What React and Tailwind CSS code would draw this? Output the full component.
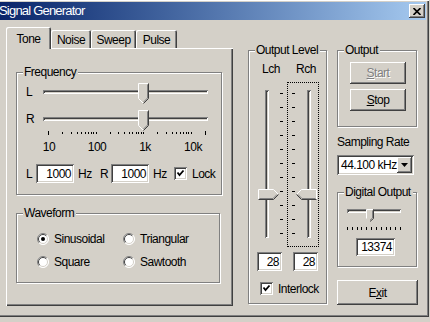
import React from 'react';

const RAISED = 'bg-[#d4d0c8] shadow-[inset_-1px_-1px_#404040,inset_1px_1px_#ffffff,inset_-2px_-2px_#808080,inset_2px_2px_#d4d0c8]';
const SUNKEN = 'bg-white shadow-[inset_1px_1px_#808080,inset_-1px_-1px_#ffffff,inset_2px_2px_#404040,inset_-2px_-2px_#d4d0c8]';
const TRACK = 'bg-[#d4d0c8] shadow-[inset_1px_1px_#808080,inset_-1px_-1px_#ffffff,inset_2px_2px_#404040]';

const FREQS = [];
[10, 100, 1000].forEach(d => { for (let i = 1; i < 10; i++) FREQS.push(d * i); });
FREQS.push(10000, 20000);

function Group({ label, className = '', children }) {
  return (
    <div className={`relative shrink-0 border border-[#808080] shadow-[inset_1px_1px_#ffffff,1px_1px_#ffffff] ${className}`}>
      <span className="absolute -top-[8px] left-[6px] bg-[#d4d0c8] pl-px pr-[2px] leading-[14px]">{label}</span>
      {children}
    </div>
  );
}

function ThumbDown() {
  return (
    <svg width="11" height="21" viewBox="0 0 11 21" className="block">
      <path d="M0.5 15.5V0.5H10.5V15.5L5.5 20.5Z" fill="#d4d0c8" />
      <path d="M0.5 15.5V0.5H10" stroke="#fff" fill="none" />
      <path d="M0.5 15.5L5 20" stroke="#fff" fill="none" />
      <path d="M10.5 0.5V15.5L5.5 20.5" stroke="#404040" fill="none" />
      <path d="M9.5 1.5V15L5.5 19" stroke="#808080" fill="none" />
    </svg>
  );
}

function ThumbSmall() {
  return (
    <svg width="8" height="13" viewBox="0 0 8 13" className="block">
      <path d="M0.5 9.5V0.5H7.5V9.5L4 12.5Z" fill="#d4d0c8" />
      <path d="M0.5 9.5V0.5H7" stroke="#fff" fill="none" />
      <path d="M7.5 0.5V9.5L4 12.5" stroke="#404040" fill="none" />
      <path d="M6.5 1.5V9L4 11.2" stroke="#808080" fill="none" />
    </svg>
  );
}

function ThumbSide({ dir }) {
  const flip = dir === 'left' ? 'scale(-1,1) translate(-21,0)' : undefined;
  return (
    <svg width="21" height="11" viewBox="0 0 21 11" className="block">
      <g transform={flip}>
        <path d="M0.5 0.5H15.5L20.5 5.5L15.5 10.5H0.5Z" fill="#d4d0c8" />
        <path d="M0.5 10.5V0.5H15.5L20 5" stroke="#fff" fill="none" />
        <path d="M0.5 10.5H15.5L20.5 5.5" stroke="#404040" fill="none" />
        <path d="M1.5 9.5H15L19 5.5" stroke="#808080" fill="none" />
      </g>
    </svg>
  );
}

function HSlider({ left }) {
  return (
    <div className="relative h-[21px] w-[165px]">
      <div className={`mt-[7px] h-[4px] w-full ${TRACK}`} />
      <div className="absolute top-0" style={{ left }}>
        <ThumbDown />
      </div>
    </div>
  );
}

function VTicks({ className = '' }) {
  return (
    <div className={`flex flex-col gap-[13px] ${className}`}>
      {Array.from({ length: 11 }).map((_, i) => (
        <div key={i} className="h-px w-[3px] bg-black" />
      ))}
    </div>
  );
}

function Radio({ checked }) {
  return (
    <svg width="12" height="12" viewBox="0 0 12 12" className="block shrink-0">
      <circle cx="6" cy="6" r="5.5" fill="#fff" />
      <path d="M2.1 9.9A5.5 5.5 0 0 1 9.9 2.1" stroke="#808080" fill="none" />
      <path d="M9.9 2.1A5.5 5.5 0 0 1 2.1 9.9" stroke="#fff" fill="none" />
      <path d="M2.8 9.2A4.5 4.5 0 0 1 9.2 2.8" stroke="#404040" fill="none" />
      <path d="M9.2 2.8A4.5 4.5 0 0 1 2.8 9.2" stroke="#d4d0c8" fill="none" />
      {checked && <circle cx="6" cy="6" r="2" fill="#000" />}
    </svg>
  );
}

function Check() {
  return (
    <div className={`h-[13px] w-[13px] shrink-0 ${SUNKEN}`}>
      <svg width="13" height="13" viewBox="0 0 13 13" className="block">
        <path d="M3.5 5.5L5.5 8L9.5 3.5" stroke="#000" strokeWidth="1.8" fill="none" />
      </svg>
    </div>
  );
}

function Field({ value, className = '' }) {
  return (
    <div className={`flex items-center justify-end pr-[3px] ${SUNKEN} ${className}`}>{value}</div>
  );
}

function Tab({ label, selected, className }) {
  if (selected) {
    return (
      <div className={`relative z-10 -mb-px flex h-[22px] justify-center rounded-t-[2px] bg-[#d4d0c8] pt-[5px] shadow-[inset_1px_1px_#ffffff,inset_-1px_0_#404040,inset_-2px_0_#808080] ${className}`}>
        {label}
      </div>
    );
  }
  return (
    <div className={`flex h-[18px] justify-center rounded-t-[2px] pt-[3px] shadow-[inset_1px_1px_#ffffff,inset_-1px_0_#404040,inset_-2px_0_#808080] ${className}`}>
      {label}
    </div>
  );
}

export default function App() {
  const tickX = f => 31 + 47.5 * Math.log10(f / 10);

  return (
    <div className="h-[322px] w-[430px] overflow-hidden bg-[#d4d0c8] font-['Liberation_Sans',Arial,sans-serif] text-[12px] leading-[14px] tracking-[-0.5px] text-black">
      <div className="flex h-[317px] w-[429px] flex-col shadow-[inset_0_1px_#ffffff,inset_-1px_-1px_#404040,inset_-2px_-2px_#808080]">
        {/* title bar */}
        <div className="mr-[3px] mt-[2px] flex h-[18px] items-center justify-between bg-linear-to-r from-[#0a246a] to-[#a6caf0]">
          <span className="-ml-px text-[13px] tracking-[-0.8px] text-white">Signal Generator</span>
          <div className={`mr-px flex h-[14px] w-[16px] items-center justify-center ${RAISED}`}>
            <svg width="8" height="7" viewBox="0 0 8 7" className="block">
              <path d="M0.5 0L7.5 7M7.5 0L0.5 7" stroke="#000" strokeWidth="1.6" />
            </svg>
          </div>
        </div>

        <div className="flex items-start">
          {/* tabs */}
          <div className="ml-[6px] mt-[7px] flex w-[227px] shrink-0 flex-col">
            <div className="flex h-[21px] items-end">
              <Tab label="Tone" selected className="w-[45px]" />
              <Tab label="Noise" className="w-[40px]" />
              <Tab label="Sweep" className="w-[45px]" />
              <Tab label="Pulse" className="w-[41px]" />
            </div>
            <div className="flex h-[258px] flex-col pl-[10px] pt-[24px] shadow-[inset_1px_1px_#ffffff,inset_-1px_-1px_#404040,inset_-2px_-2px_#808080]">
              <Group label="Frequency" className="h-[123px] w-[206px]">
                <div className="ml-[9px] mt-[10px] flex items-start">
                  <span className="mt-[2px] w-[17px]">L</span>
                  <HSlider left={95} />
                </div>
                <div className="ml-[9px] mt-[6px] flex items-start">
                  <span className="mt-[2px] w-[17px]">R</span>
                  <HSlider left={95} />
                </div>
                <svg width="205" height="5" className="block">
                  {FREQS.map((f, i) => {
                    const long = i === 0 || i === FREQS.length - 1;
                    return <rect key={f} x={Math.round(tickX(f))} y={long ? 0 : 1} width="1" height={long ? 4 : 2} fill="#000" />;
                  })}
                </svg>
                <div className="ml-[8px] mt-[4px] flex">
                  {['10', '100', '1k', '10k'].map(t => (
                    <span key={t} className="w-[48px] text-center">{t}</span>
                  ))}
                </div>
                <div className="mt-[10px] flex h-[19px] items-center pl-[9px]">
                  <span className="w-[10px]">L</span>
                  <Field value="1000" className="h-[19px] w-[38px]" />
                  <span className="ml-[4px] w-[22px]">Hz</span>
                  <span className="w-[11px]">R</span>
                  <Field value="1000" className="h-[19px] w-[38px]" />
                  <span className="ml-[4px] w-[21px]">Hz</span>
                  <Check />
                  <span className="ml-[5px]">Lock</span>
                </div>
              </Group>

              <Group label="Waveform" className="mt-[18px] h-[70px] w-[204px]">
                <div className="ml-[20px] mt-[18px] grid grid-cols-[86px_86px] gap-y-[9px]">
                  <div className="flex h-[14px] items-center gap-[5px]"><Radio checked /><span>Sinusoidal</span></div>
                  <div className="flex h-[14px] items-center gap-[5px]"><Radio /><span>Triangular</span></div>
                  <div className="flex h-[14px] items-center gap-[5px]"><Radio /><span>Square</span></div>
                  <div className="flex h-[14px] items-center gap-[5px]"><Radio /><span>Sawtooth</span></div>
                </div>
              </Group>
            </div>
          </div>

          {/* output level */}
          <Group label="Output Level" className="ml-[15px] mt-[30px] h-[254px] w-[79px]">
            <div className="ml-[13px] mt-[11px] flex">
              <span className="w-[34px]">Lch</span>
              <span>Rch</span>
            </div>
            <div className="mt-[6px] flex h-[165px] items-start">
              <div className="relative ml-[9px] h-[165px] w-[21px] shrink-0">
                <div className={`ml-[7px] mt-[8px] h-[148px] w-[4px] ${TRACK}`} />
                <div className="absolute left-0 top-[107px]"><ThumbSide dir="right" /></div>
              </div>
              <VTicks className="ml-px mt-[11px]" />
              <div className="ml-[4px] flex h-[165px] w-[32px] items-start border border-dotted border-black">
                <VTicks className="ml-[4px] mt-[10px]" />
                <div className="relative ml-px h-[163px] w-[21px] shrink-0">
                  <div className={`ml-[11px] mt-[7px] h-[148px] w-[4px] ${TRACK}`} />
                  <div className="absolute left-0 top-[106px]"><ThumbSide dir="left" /></div>
                </div>
              </div>
            </div>
            <div className="mt-[5px] flex">
              <Field value="28" className="ml-[8px] h-[19px] w-[25px]" />
              <Field value="28" className="ml-[11px] h-[19px] w-[25px]" />
            </div>
            <div className="ml-[11px] mt-[11px] flex h-[13px] items-center">
              <Check />
              <span className="ml-[5px]">Interlock</span>
            </div>
          </Group>

          {/* right column */}
          <div className="ml-[10px] mt-[30px] flex w-[81px] shrink-0 flex-col">
            <Group label="Output" className="h-[77px] w-[80px]">
              <div className={`ml-[12px] mt-[11px] flex h-[22px] w-[56px] items-center justify-center text-[#808080] text-shadow-[1px_1px_0_#ffffff] ${RAISED}`}>
                <span><span className="underline">S</span>tart</span>
              </div>
              <div className={`ml-[12px] mt-[5px] flex h-[22px] w-[56px] items-center justify-center ${RAISED}`}>
                <span><span className="underline">S</span>top</span>
              </div>
            </Group>

            <span className="mt-[8px]">Sampling Rate</span>
            <div className={`mt-[6px] flex h-[20px] w-[77px] items-center justify-between pl-[4px] pr-[2px] ${SUNKEN}`}>
              <span>44.100 kHz</span>
              <div className={`flex h-[16px] w-[15px] items-center justify-center ${RAISED}`}>
                <svg width="7" height="4" viewBox="0 0 7 4" className="block"><path d="M0 0H7L3.5 4Z" fill="#000" /></svg>
              </div>
            </div>

            <Group label="Digital Output" className="mt-[17px] h-[75px] w-[80px]">
              <div className="relative ml-[9px] mt-[16px] h-[13px] w-[54px]">
                <div className={`mt-[3px] h-[4px] w-full ${TRACK}`} />
                <div className="absolute left-[19px] top-0"><ThumbSmall /></div>
              </div>
              <div className="ml-[9px] mt-[5px] flex h-[3px] w-[54px] justify-between">
                {Array.from({ length: 12 }).map((_, i) => (
                  <div key={i} className="h-[3px] w-px bg-black" />
                ))}
              </div>
              <Field value="13374" className="ml-[18px] mt-[8px] h-[18px] w-[39px]" />
            </Group>

            <div className={`mt-[13px] flex h-[25px] w-[81px] items-center justify-center ${RAISED}`}>
              <span>E<span className="underline">x</span>it</span>
            </div>
          </div>
        </div>
      </div>
    </div>
  );
}
